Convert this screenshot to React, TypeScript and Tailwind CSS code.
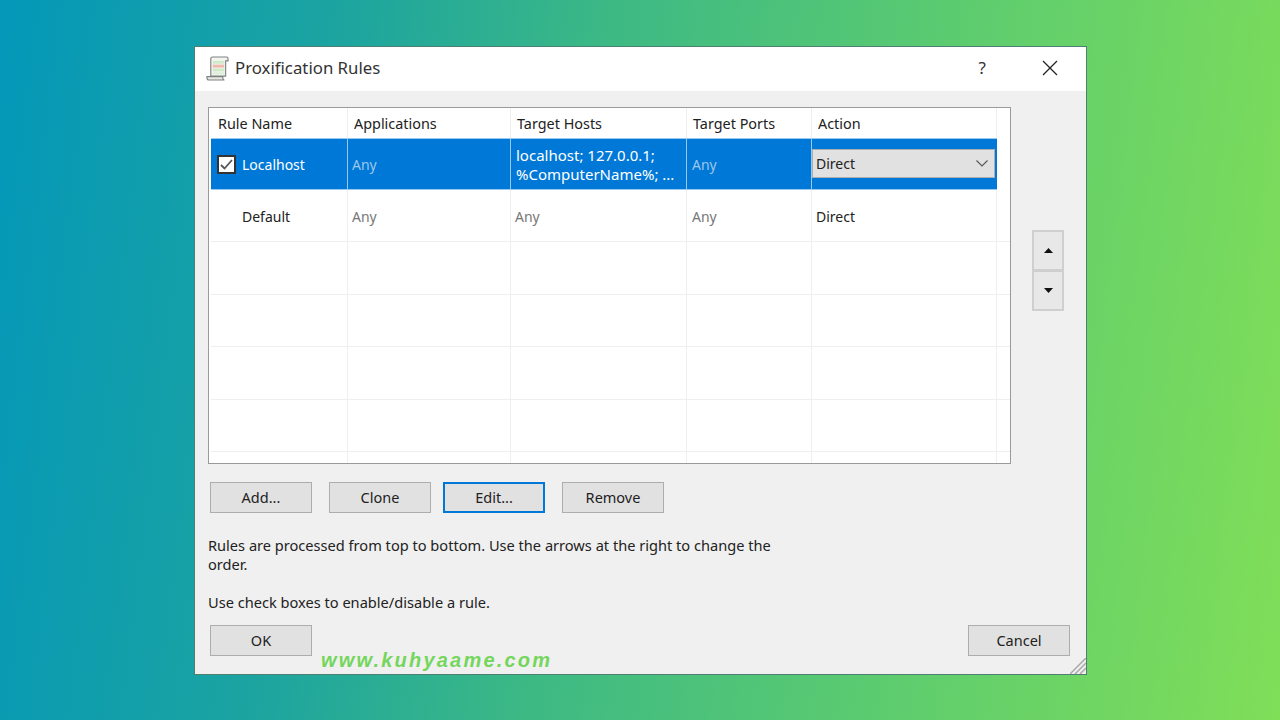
const font = "font-['Noto_Sans','Open_Sans',sans-serif]";

const columns = [
  { label: "Rule Name", width: "w-[137px]", pad: "pl-[7px]" },
  { label: "Applications", width: "w-[163px]", pad: "pl-[6px]" },
  { label: "Target Hosts", width: "w-[176px]", pad: "pl-[6px]" },
  { label: "Target Ports", width: "w-[125px]", pad: "pl-[6px]" },
  { label: "Action", width: "w-[185px]", pad: "pl-[6px]" },
];

const emptyRows = ["h-[53px]", "h-[52px]", "h-[53px]", "h-[52px]", "h-[12px]"];

function ScrollIcon() {
  return (
    <svg width="23" height="25" viewBox="0 0 24 26" className="shrink-0">
      <path d="M5 2.500C5 1.500 6 1 7 1h14.500c1 0 1.500 1 1.500 2v2h-2.500v16H5z" fill="#f4f4f0" stroke="#7d8283" strokeWidth="1.200" />
      <path d="M1 21.500h16.500v1.500c0 1.200.8 2 1.800 2H3c-1.200 0-2-.8-2-2z" fill="#e8e8e4" stroke="#7d8283" strokeWidth="1.200" />
      <rect x="7" y="5" width="12" height="3" fill="#cfe9c9" />
      <rect x="7" y="9" width="12" height="3" fill="#f0b8ad" />
      <rect x="7" y="13" width="12" height="3" fill="#cfe9c9" />
      <rect x="7" y="17" width="12" height="2" fill="#dcefd7" />
    </svg>
  );
}

function DialogButton({ label, focused = false }: { label: string; focused?: boolean }) {
  return (
    <button
      className={
        focused
          ? "w-[102px] h-[31px] bg-[#e1e1e1] border-2 border-[#0078d7] text-[14.500px] text-[#222]"
          : "w-[102px] h-[31px] bg-[#e1e1e1] border border-[#adadad] text-[14.500px] text-[#222]"
      }
    >
      {label}
    </button>
  );
}

function Cell({ width, selected = false, children }: { width: string; selected?: boolean; children?: React.ReactNode }) {
  return (
    <div
      className={
        selected
          ? `${width} h-full flex items-center pt-px border-r border-[#99c9ef] shrink-0`
          : `${width} h-full flex items-center pt-px border-r border-[#efefef] shrink-0`
      }
    >
      {children}
    </div>
  );
}

export default function App() {
  return (
    <div className={`${font} h-screen pl-px pt-px flex items-center justify-center bg-[linear-gradient(97deg,#0498b9_0%,#1ca4a0_25%,#3db984_45%,#62cf6c_75%,#80de58_100%)]`}>
      <div className="relative w-[893px] h-[629px] flex flex-col bg-[#f0f0f0] border border-[#4f7f72] text-[14px] text-[#222]">
        <div className="h-[44px] bg-white flex items-center pl-[11px] pb-[2px] shrink-0">
          <ScrollIcon />
          <span className="ml-[6px] text-[16.800px] text-[#333]">Proxification Rules</span>
          <span className="ml-auto text-[17px] text-[#333]">?</span>
          <svg width="16" height="16" viewBox="0 0 16 16" className="ml-[56px] mr-[28px]">
            <path d="M1 1l14 14M15 1L1 15" stroke="#222" strokeWidth="1.300" />
          </svg>
        </div>

        <div className="flex flex-col flex-1 pl-[13px] pr-[16px] pt-[16px]">
          <div className="flex">
            <div className="w-[803px] h-[357px] bg-white border border-[#9a9a9a] pl-[2px] overflow-hidden shrink-0">
              <div className="flex h-[30px] items-center text-[14.400px]">
                {columns.map((column) => (
                  <Cell key={column.label} width={column.width}>
                    <span className={column.pad}>{column.label}</span>
                  </Cell>
                ))}
              </div>

              <div className="flex h-[52px] w-[786px] bg-[#0078d7] border-y border-[#99c9ef] text-white">
                <Cell width={columns[0].width} selected>
                  <span className="ml-[6px] w-[19px] h-[19px] bg-white border-2 border-[#333] flex items-center justify-center">
                    <svg width="13" height="11" viewBox="0 0 13 11">
                      <path d="M1 6l3.500 3.500L12 1" fill="none" stroke="#555" strokeWidth="1.800" />
                    </svg>
                  </span>
                  <span className="ml-[6px]">Localhost</span>
                </Cell>
                <Cell width={columns[1].width} selected>
                  <span className="pl-[4px] text-[#9cc6ea]">Any</span>
                </Cell>
                <Cell width={columns[2].width} selected>
                  <span className="pl-[5px] leading-[19px] text-[15px] whitespace-nowrap">
                    localhost; 127.0.0.1;
                    <br />
                    %ComputerName%; ...
                  </span>
                </Cell>
                <Cell width={columns[3].width} selected>
                  <span className="pl-[5px] text-[#9cc6ea]">Any</span>
                </Cell>
                <div className="w-[185px] h-full flex items-start pt-[10px]">
                  <div className="w-[183px] h-[29px] bg-[#e1e1e1] border border-[#adadad] flex items-center justify-between pl-[3px] pr-[6px] text-[#222]">
                    <span>Direct</span>
                    <svg width="12" height="7" viewBox="0 0 12 7">
                      <path d="M.5.5L6 6l5.500-5.500" fill="none" stroke="#555" strokeWidth="1.100" />
                    </svg>
                  </div>
                </div>
              </div>

              <div className="flex h-[52px] border-b border-[#efefef]">
                <Cell width={columns[0].width}>
                  <span className="pl-[31px]">Default</span>
                </Cell>
                <Cell width={columns[1].width}>
                  <span className="pl-[4px] text-[#777]">Any</span>
                </Cell>
                <Cell width={columns[2].width}>
                  <span className="pl-[4px] text-[#777]">Any</span>
                </Cell>
                <Cell width={columns[3].width}>
                  <span className="pl-[5px] text-[#777]">Any</span>
                </Cell>
                <Cell width={columns[4].width}>
                  <span className="pl-[4px]">Direct</span>
                </Cell>
              </div>

              {emptyRows.map((height, index) => (
                <div key={index} className={`flex ${height} border-b border-[#efefef]`}>
                  {columns.map((column) => (
                    <Cell key={column.label} width={column.width} />
                  ))}
                </div>
              ))}
            </div>

            <div className="flex flex-col ml-[21px] mt-[123px] w-[32px]">
              <button className="h-[41px] bg-[#e8e8e8] border-2 border-[#cfcfcf] flex items-center justify-center">
                <svg width="9" height="5" viewBox="0 0 9 5"><path d="M4.500 0L9 5H0z" fill="#111" /></svg>
              </button>
              <button className="h-[41px] -mt-px bg-[#e8e8e8] border-2 border-[#cfcfcf] flex items-center justify-center">
                <svg width="9" height="5" viewBox="0 0 9 5"><path d="M0 0h9L4.500 5z" fill="#111" /></svg>
              </button>
            </div>
          </div>

          <div className="flex mt-[18px] pl-[2px]">
            <DialogButton label="Add..." />
            <div className="ml-[17px]"><DialogButton label="Clone" /></div>
            <div className="ml-[12px]"><DialogButton label="Edit..." focused /></div>
            <div className="ml-[17px]"><DialogButton label="Remove" /></div>
          </div>

          <p className="mt-[23px] w-[575px] text-[14.600px] leading-[19px]">
            Rules are processed from top to bottom. Use the arrows at the right to change the order.
          </p>
          <p className="mt-[19px] text-[14.600px] leading-[19px]">Use check boxes to enable/disable a rule.</p>

          <div className="flex justify-between mt-[13px] pl-[2px]">
            <DialogButton label="OK" />
            <DialogButton label="Cancel" />
          </div>
        </div>

        <span className="absolute left-[126px] bottom-[-1px] font-['Liberation_Sans',sans-serif] italic font-bold text-[20px] tracking-[2.200px] text-[#74d65c]">
          www.kuhyaame.com
        </span>
        <svg width="16" height="16" viewBox="0 0 16 16" className="absolute right-0 bottom-0">
          <path d="M0 16L16 0M5 16L16 5M10 16l6-6" stroke="#a8a8a8" strokeWidth="1.500" />
        </svg>
      </div>
    </div>
  );
}
